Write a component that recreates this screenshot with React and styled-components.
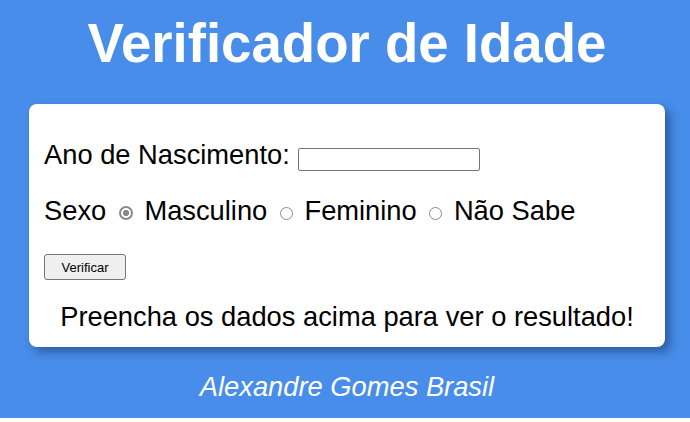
import React from "react";
import styled, { createGlobalStyle } from "styled-components";

const Global = createGlobalStyle`
  html { background: #ffffff; }
  body {
    margin: 0;
    font-family: "Liberation Sans", Arial, sans-serif;
  }
`;

const Page = styled.div`
  width: 690px;
  min-height: 418px;
  box-sizing: border-box;
  background: #478de9;
  padding: 12px 25px 0 29px;
  display: flex;
  flex-direction: column;
`;

const Title = styled.h1`
  margin: 0;
  font-size: 54.6px;
  line-height: 63px;
  font-weight: bold;
  color: #ffffff;
  text-align: center;
`;

const Card = styled.div`
  margin-top: 29px;
  background: #ffffff;
  border-radius: 8px;
  box-shadow: 5px 5px 10px rgba(10, 30, 80, 0.45);
  padding: 35px 15px 15px 15px;
  display: flex;
  flex-direction: column;
  color: #000;
`;

const Row = styled.div`
  font-size: 27.3px;
  line-height: 31px;
  margin-top: ${(p) => p.$gap || 0}px;
  white-space: nowrap;
`;

const YearInput = styled.input`
  width: 182px;
  height: 23px;
  box-sizing: border-box;
  border: 1px solid #767676;
  border-radius: 2px;
  padding: 1px 2px;
  font-size: 13px;
  margin-left: 1px;
  vertical-align: baseline;
`;

const Radio = styled.input.attrs({ type: "radio" })`
  appearance: none;
  -webkit-appearance: none;
  width: 13px;
  height: 13px;
  box-sizing: border-box;
  margin: 0 4px 0 5px;
  border: 1px solid #8a8a8a;
  border-radius: 50%;
  background: #fff;
  vertical-align: baseline;
  &:checked {
    width: 14px;
    height: 14px;
    border: 2px solid #8a8a8a;
    background: radial-gradient(circle, #8a8a8a 0 2.8px, #ffffff 3.4px);
  }
`;

const ButtonWrap = styled.div`
  margin-top: ${(p) => p.$gap}px;
  line-height: 0;
`;

const Button = styled.button`
  width: 82px;
  height: 26px;
  box-sizing: border-box;
  background: #efefef;
  border: 1px solid #767676;
  border-radius: 3px;
  font-family: "Liberation Sans", Arial, sans-serif;
  font-size: 13px;
  color: #000;
  padding: 0;
`;

const Result = styled.p`
  margin: 21px 0 0 0;
  font-size: 27.3px;
  line-height: 31px;
  text-align: center;
`;

const Footer = styled.p`
  margin: 24px 0 0 0;
  font-size: 27.3px;
  line-height: 31px;
  font-style: italic;
  color: #ffffff;
  text-align: center;
`;

export default function App() {
  return (
    <>
      <Global />
      <Page>
        <Title>Verificador de Idade</Title>
        <Card>
          <Row>
            Ano de Nascimento: <YearInput type="text" />
          </Row>
          <Row $gap={24}>
            Sexo <Radio name="sexo" defaultChecked /> Masculino <Radio name="sexo" /> Feminino <Radio name="sexo" /> Não Sabe
          </Row>
          <ButtonWrap $gap={28}>
            <Button>Verificar</Button>
          </ButtonWrap>
          <Result>Preencha os dados acima para ver o resultado!</Result>
        </Card>
        <Footer>Alexandre Gomes Brasil</Footer>
      </Page>
    </>
  );
}
